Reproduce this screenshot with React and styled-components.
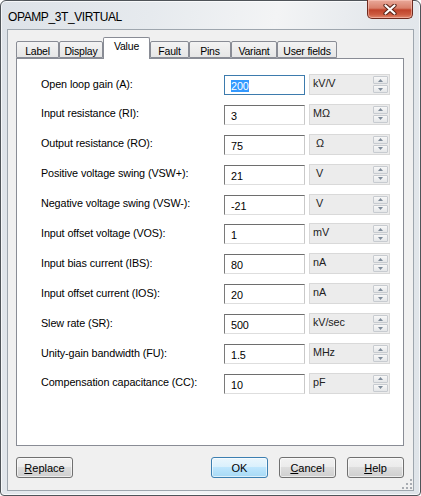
import React from "react";
import styled, { createGlobalStyle } from "styled-components";

const GlobalStyle = createGlobalStyle`
  html, body {
    margin: 0;
    padding: 0;
    background: #ffffff;
  }
  * {
    box-sizing: border-box;
  }
`;

const rows = [
  { label: "Open loop gain (A):", value: "200", unit: "kV/V", focused: true },
  { label: "Input resistance (RI):", value: "3", unit: "MΩ" },
  { label: "Output resistance (RO):", value: "75", unit: " Ω" },
  { label: "Positive voltage swing (VSW+):", value: "21", unit: " V" },
  { label: "Negative voltage swing (VSW-):", value: "-21", unit: " V" },
  { label: "Input offset voltage (VOS):", value: "1", unit: "mV" },
  { label: "Input bias current (IBS):", value: "80", unit: "nA" },
  { label: "Input offset current (IOS):", value: "20", unit: "nA" },
  { label: "Slew rate (SR):", value: "500", unit: "kV/sec" },
  { label: "Unity-gain bandwidth (FU):", value: "1.5", unit: "MHz" },
  { label: "Compensation capacitance (CC):", value: "10", unit: "pF" },
];

const tabs = [
  { name: "Label", width: 43 },
  { name: "Display", width: 44 },
  { name: "Value", width: 47, active: true },
  { name: "Fault", width: 39 },
  { name: "Pins", width: 42 },
  { name: "Variant", width: 46 },
  { name: "User fields", width: 60 },
];

function App() {
  return (
    <>
      <GlobalStyle />
      <Window>
        <TitleBar>
          <Title>OPAMP_3T_VIRTUAL</Title>
          <CloseButton>
            <svg width="14" height="11" viewBox="0 0 14 11">
              <path d="M2.5 1.5 L11.5 9.5 M11.5 1.5 L2.5 9.5" stroke="#5a2418" strokeWidth="4.2" strokeLinecap="round" fill="none" />
              <path d="M2.5 1.5 L11.5 9.5 M11.5 1.5 L2.5 9.5" stroke="#ffffff" strokeWidth="2.2" strokeLinecap="round" fill="none" />
            </svg>
          </CloseButton>
        </TitleBar>
        <Client>
          <TabStrip>
            {tabs.map((t) => (
              <Tab key={t.name} $width={t.width} $active={t.active}>
                {t.name}
              </Tab>
            ))}
          </TabStrip>
          <Panel>
            {rows.map((r) => (
              <Row key={r.label}>
                <Label>{r.label}</Label>
                <Field $focused={r.focused}>
                  {r.focused ? <Selected>{r.value}</Selected> : r.value}
                </Field>
                <UnitBox>
                  <UnitText>{r.unit}</UnitText>
                  <Spinner>
                    <SpinButton>
                      <svg width="5" height="3" viewBox="0 0 5 3">
                        <path d="M0 3 L2.5 0 L5 3 Z" fill="#7d8a99" />
                      </svg>
                    </SpinButton>
                    <SpinButton>
                      <svg width="5" height="3" viewBox="0 0 5 3">
                        <path d="M0 0 L5 0 L2.5 3 Z" fill="#7d8a99" />
                      </svg>
                    </SpinButton>
                  </Spinner>
                </UnitBox>
              </Row>
            ))}
          </Panel>
          <ButtonRow>
            <Button>
              <u>R</u>eplace
            </Button>
            <Spacer />
            <Button $default>OK</Button>
            <Button>
              <u>C</u>ancel
            </Button>
            <Button>
              <u>H</u>elp
            </Button>
          </ButtonRow>
          <SizeGrip>
            <svg width="10" height="10" viewBox="0 0 10 10">
              {[
                [8, 0],
                [8, 4],
                [4, 4],
                [8, 8],
                [4, 8],
                [0, 8],
              ].map(([x, y]) => (
                <rect key={`${x}-${y}`} x={x} y={y} width="2" height="2" fill="#a8acb2" />
              ))}
            </svg>
          </SizeGrip>
        </Client>
      </Window>
    </>
  );
}

export default App;

const Window = styled.div`
  width: 421px;
  height: 496px;
  border: 1px solid #4f5459;
  border-radius: 6px 6px 4px 4px;
  padding: 0 6px 4px 6px;
  display: flex;
  flex-direction: column;
  background: linear-gradient(
    100deg,
    #dde2e8 0%,
    #e6eaee 30%,
    #f3f4f5 55%,
    #e4e8ec 75%,
    #dfe4e9 100%
  );
  box-shadow: inset 0 0 0 1px rgba(255, 255, 255, 0.7);
`;

const TitleBar = styled.div`
  height: 28px;
  display: flex;
  align-items: flex-start;
  justify-content: space-between;
`;

const Title = styled.div`
  font-family: "Liberation Sans", Arial, sans-serif;
  font-size: 12px;
  letter-spacing: -0.4px;
  color: #000;
  margin-top: 9px;
  margin-left: 1px;
`;

const CloseButton = styled.div`
  width: 46px;
  height: 19px;
  margin-top: -1px;
  margin-right: 1px;
  border: 1px solid #6e2a1e;
  border-top: none;
  border-radius: 0 0 5px 5px;
  display: flex;
  align-items: center;
  justify-content: center;
  background: linear-gradient(
    to bottom,
    #e9a99a 0%,
    #d9806b 45%,
    #c0432b 55%,
    #cc5a3f 80%,
    #e0876d 100%
  );
  box-shadow: inset 0 0 0 1px rgba(255, 210, 200, 0.5);
`;

const Client = styled.div`
  position: relative;
  flex: 1;
  border: 1px solid #9ea6ae;
  background: #f0f0f0;
  padding: 7px 9px 0 8px;
  display: flex;
  flex-direction: column;
`;

const TabStrip = styled.div`
  height: 21px;
  display: flex;
  align-items: flex-end;
  position: relative;
  z-index: 1;
`;

const Tab = styled.div`
  width: ${(p) => p.$width}px;
  height: ${(p) => (p.$active ? 22 : 17)}px;
  margin-bottom: ${(p) => (p.$active ? -1 : 0)}px;
  border: 1px solid #898c95;
  border-bottom: ${(p) => (p.$active ? "none" : "1px solid #898c95")};
  background: ${(p) =>
    p.$active ? "#ffffff" : "linear-gradient(to bottom, #f3f3f3, #e6e6e6)"};
  font-family: "Liberation Sans", Arial, sans-serif;
  font-size: 10.5px;
  letter-spacing: -0.2px;
  color: #000;
  display: flex;
  justify-content: center;
  white-space: nowrap;
  padding-top: ${(p) => (p.$active ? 2 : 3)}px;
  border-radius: 2px 2px 0 0;
`;

const Panel = styled.div`
  height: 388px;
  border: 1px solid #898c95;
  background: #ffffff;
  padding: 15px 9px 0 24px;
  display: flex;
  flex-direction: column;
  gap: 8.9px;
`;

const Row = styled.div`
  height: 21px;
  display: grid;
  grid-template-columns: 183px 81px 85px;
  align-items: center;
  font-family: "Liberation Sans", Arial, sans-serif;
  font-size: 10.8px;
  letter-spacing: -0.1px;
  color: #000;
`;

const Label = styled.div`
  padding-bottom: 2px;
`;

const Field = styled.div`
  height: 20px;
  margin-top: 1px;
  border: 1px solid;
  border-color: ${(p) =>
    p.$focused ? "#3d7bad" : "#6e6e6e #c9c9c9 #dedede #7a7a7a"};
  background: #ffffff;
  padding: 4px 0 0 6px;
  width: 81px;
  line-height: 13px;
`;

const Selected = styled.span`
  background: #3399ff;
  color: #ffffff;
`;

const UnitBox = styled.div`
  height: 21px;
  border: 1px solid #d9d9d9;
  background: #ececec;
  display: flex;
  justify-content: space-between;
  margin-left: 4px;
`;

const UnitText = styled.div`
  white-space: pre;
  padding: 2px 0 0 3px;
  color: #222;
`;

const Spinner = styled.div`
  width: 16px;
  display: flex;
  flex-direction: column;
  gap: 1px;
  padding: 1px 1px 1px 0;
`;

const SpinButton = styled.div`
  flex: 1;
  border: 1px solid #c7cbd0;
  background: linear-gradient(to bottom, #f8f8f8, #e4e6e8);
  display: flex;
  align-items: center;
  justify-content: center;
  border-radius: 1px;
`;

const ButtonRow = styled.div`
  display: flex;
  gap: 11px;
  margin-top: 11px;
`;

const Spacer = styled.div`
  flex: 1;
`;

const Button = styled.div`
  width: 57px;
  height: 21px;
  border: 1px solid ${(p) => (p.$default ? "#3c7fb1" : "#707070")};
  border-radius: 3px;
  background: ${(p) =>
    p.$default
      ? "linear-gradient(to bottom, #eaf6fd 0%, #d9f0fc 50%, #bee6fd 50%, #a7d9f5 100%)"
      : "linear-gradient(to bottom, #f2f2f2 0%, #ebebeb 50%, #dddddd 50%, #cfcfcf 100%)"};
  box-shadow: inset 0 0 0 1px rgba(255, 255, 255, 0.6);
  font-family: "Liberation Sans", Arial, sans-serif;
  font-size: 11px;
  color: #000;
  display: flex;
  align-items: center;
  justify-content: center;
  u {
    text-decoration: underline;
  }
`;

const SizeGrip = styled.div`
  position: absolute;
  right: 1px;
  bottom: 1px;
  width: 10px;
  height: 10px;
  display: flex;
`;
